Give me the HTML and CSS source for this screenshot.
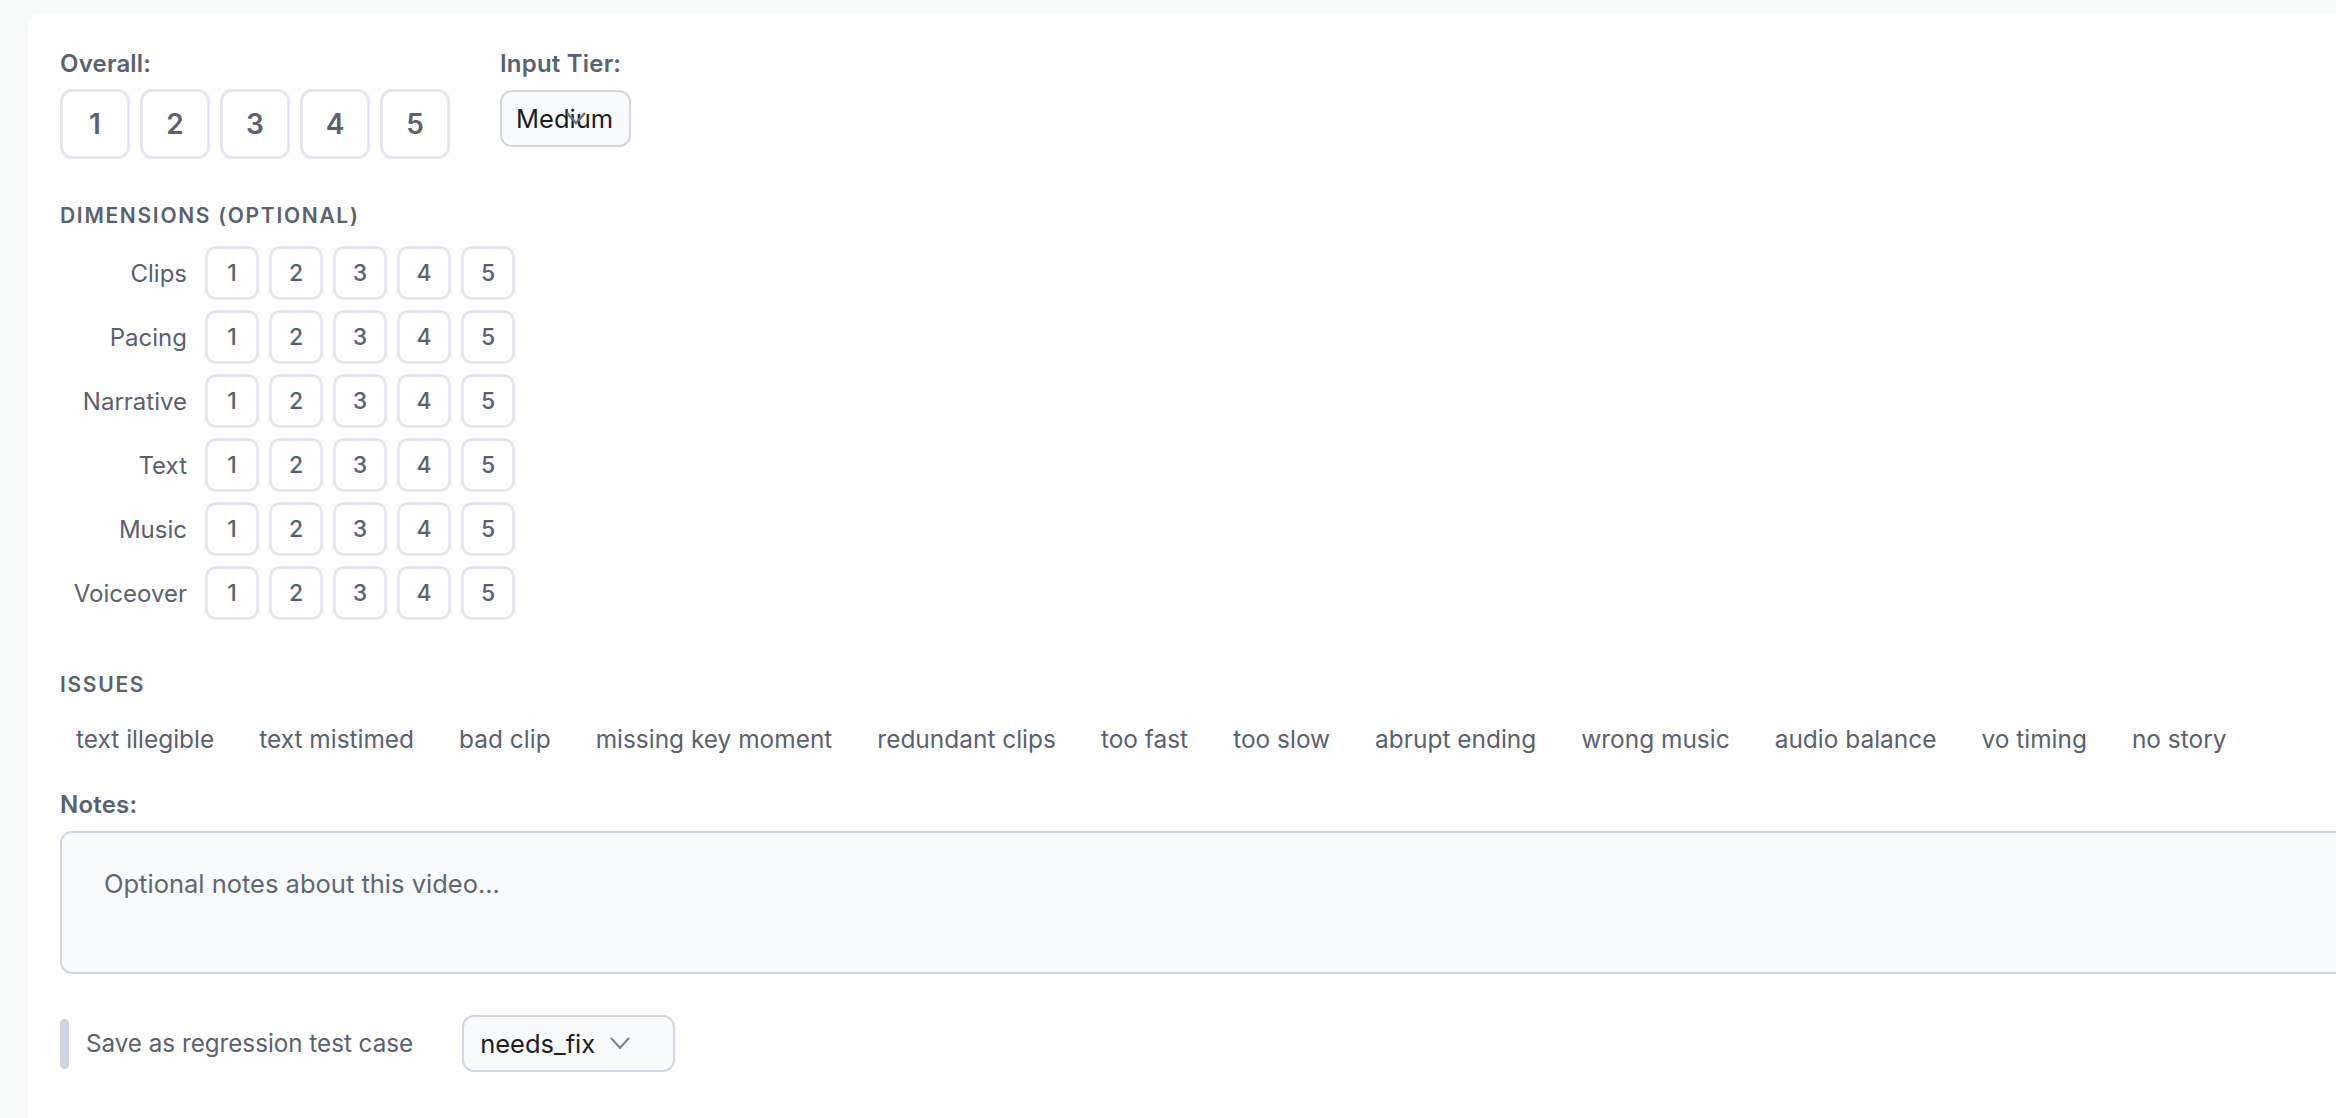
FILE: index.html
```html
<!DOCTYPE html>
<html lang="en">
<head>
  <meta charset="UTF-8" />
  <meta name="viewport" content="width=device-width, initial-scale=1.0" />
  <title>Video Review</title>
  <link rel="stylesheet" href="styles.css">
</head>
<body>
  <div class="card">
    <div class="top-row">
      <div class="field">
        <div class="label">Overall:</div>
        <div class="score-row big">
          <button class="score">1</button>
          <button class="score">2</button>
          <button class="score">3</button>
          <button class="score">4</button>
          <button class="score">5</button>
        </div>
      </div>
      <div class="field">
        <div class="label">Input Tier:</div>
        <div class="select tier">
          <span class="select-value">Medium</span>
          <svg class="select-arrow" viewBox="0 0 22 14"><path d="M2 2 L11 12 L20 2" /></svg>
        </div>
      </div>
    </div>

    <div class="section-title">Dimensions (optional)</div>
    <div class="dims">
      <div class="dim-row">
        <span class="dim-label">Clips</span>
        <div class="score-row">
          <button class="score">1</button><button class="score">2</button><button class="score">3</button><button class="score">4</button><button class="score">5</button>
        </div>
      </div>
      <div class="dim-row">
        <span class="dim-label">Pacing</span>
        <div class="score-row">
          <button class="score">1</button><button class="score">2</button><button class="score">3</button><button class="score">4</button><button class="score">5</button>
        </div>
      </div>
      <div class="dim-row">
        <span class="dim-label">Narrative</span>
        <div class="score-row">
          <button class="score">1</button><button class="score">2</button><button class="score">3</button><button class="score">4</button><button class="score">5</button>
        </div>
      </div>
      <div class="dim-row">
        <span class="dim-label">Text</span>
        <div class="score-row">
          <button class="score">1</button><button class="score">2</button><button class="score">3</button><button class="score">4</button><button class="score">5</button>
        </div>
      </div>
      <div class="dim-row">
        <span class="dim-label">Music</span>
        <div class="score-row">
          <button class="score">1</button><button class="score">2</button><button class="score">3</button><button class="score">4</button><button class="score">5</button>
        </div>
      </div>
      <div class="dim-row">
        <span class="dim-label">Voiceover</span>
        <div class="score-row">
          <button class="score">1</button><button class="score">2</button><button class="score">3</button><button class="score">4</button><button class="score">5</button>
        </div>
      </div>
    </div>

    <div class="section-title issues-title">Issues</div>
    <div class="chips">
      <span class="chip">text illegible</span>
      <span class="chip">text mistimed</span>
      <span class="chip">bad clip</span>
      <span class="chip">missing key moment</span>
      <span class="chip">redundant clips</span>
      <span class="chip">too fast</span>
      <span class="chip">too slow</span>
      <span class="chip">abrupt ending</span>
      <span class="chip">wrong music</span>
      <span class="chip">audio balance</span>
      <span class="chip">vo timing</span>
      <span class="chip">no story</span>
    </div>

    <div class="label notes-label">Notes:</div>
    <textarea class="notes" placeholder="Optional notes about this video..."></textarea>

    <div class="save-row">
      <span class="toggle"></span>
      <span class="save-label">Save as regression test case</span>
      <div class="select status">
        <span class="select-value">needs_fix</span>
        <svg class="select-arrow" viewBox="0 0 22 14"><path d="M2 2 L11 12 L20 2" /></svg>
      </div>
    </div>
  </div>
</body>
</html>
```

FILE: styles.css
```css
body {
  margin: 0;
  background-color: #f9fafa;
  font-family: Inter, 'Noto Sans', sans-serif;
  color: #5a6170;
  overflow: hidden;
}
.card {
  background-color: #fff;
  margin: 13px 0 0 28px;
  width: 2500px;
  height: 1200px;
  padding: 34px 32px 0;
  border-radius: 14px;
  box-sizing: border-box;
}
.top-row {
  display: flex;
  gap: 50px;
}
.label {
  font-size: 24px;
  line-height: 33px;
  font-weight: 600;
  letter-spacing: 0.2px;
}
.score-row {
  display: flex;
  gap: 10px;
}
.score {
  width: 54px;
  height: 54px;
  padding: 0;
  border: 3px solid #e6e7ee;
  border-radius: 11px;
  background-color: #fff;
  font-family: inherit;
  font-size: 23px;
  font-weight: 500;
  color: #5a6170;
}
.big {
  margin-top: 9px;
}
.big .score {
  width: 70px;
  height: 70px;
  border-radius: 12px;
  font-size: 28px;
  font-weight: 600;
}
.select {
  position: relative;
  display: flex;
  align-items: center;
  height: 57px;
  box-sizing: border-box;
  border: 2px solid #d3d6e2;
  border-radius: 12px;
  background-color: #f9fafb;
  padding-left: 16px;
  font-size: 25.5px;
  color: #1d1d1f;
}
.select-arrow {
  position: absolute;
  right: 42px;
  top: 19px;
  width: 22px;
  height: 14px;
  fill: none;
  stroke: #7a8090;
  stroke-width: 2;
}
.tier {
  width: 131px;
  margin-top: 10px;
  padding-left: 14px;
}
.tier .select-arrow {
  stroke: #6b7282;
  stroke-width: 2.4;
}
.section-title {
  margin-top: 42px;
  font-size: 21px;
  line-height: 29px;
  font-weight: 600;
  text-transform: uppercase;
  letter-spacing: 1.7px;
}
.dims {
  margin-top: 16px;
  display: flex;
  flex-direction: column;
  gap: 10px;
}
.dim-row {
  display: flex;
  align-items: center;
}
.dim-label {
  width: 127px;
  margin-right: 18px;
  text-align: right;
  font-size: 24px;
}
.issues-title {
  margin-top: 50px;
}
.chips {
  display: flex;
  flex-wrap: wrap;
  gap: 13px;
  margin-top: 17px;
}
.chip {
  padding: 6px 16px;
  font-size: 24.45px;
  line-height: 34px;
}
.notes-label {
  margin-top: 26px;
}
.notes {
  display: block;
  width: 100%;
  height: 143px;
  margin-top: 10px;
  box-sizing: border-box;
  border: 2px solid #d3d6e2;
  border-radius: 12px;
  background-color: #f9fafb;
  padding: 33px 42px;
  font-family: inherit;
  font-size: 25.5px;
  line-height: 36px;
  resize: none;
}
.notes::placeholder {
  color: #5f6675;
}
.save-row {
  display: flex;
  align-items: center;
  margin-top: 41px;
}
.toggle {
  width: 9px;
  height: 50px;
  border-radius: 5px;
  background-color: #cfd4e0;
}
.save-label {
  margin-left: 17px;
  font-size: 24.2px;
}
.status {
  width: 213px;
  margin-left: 49px;
}
```
